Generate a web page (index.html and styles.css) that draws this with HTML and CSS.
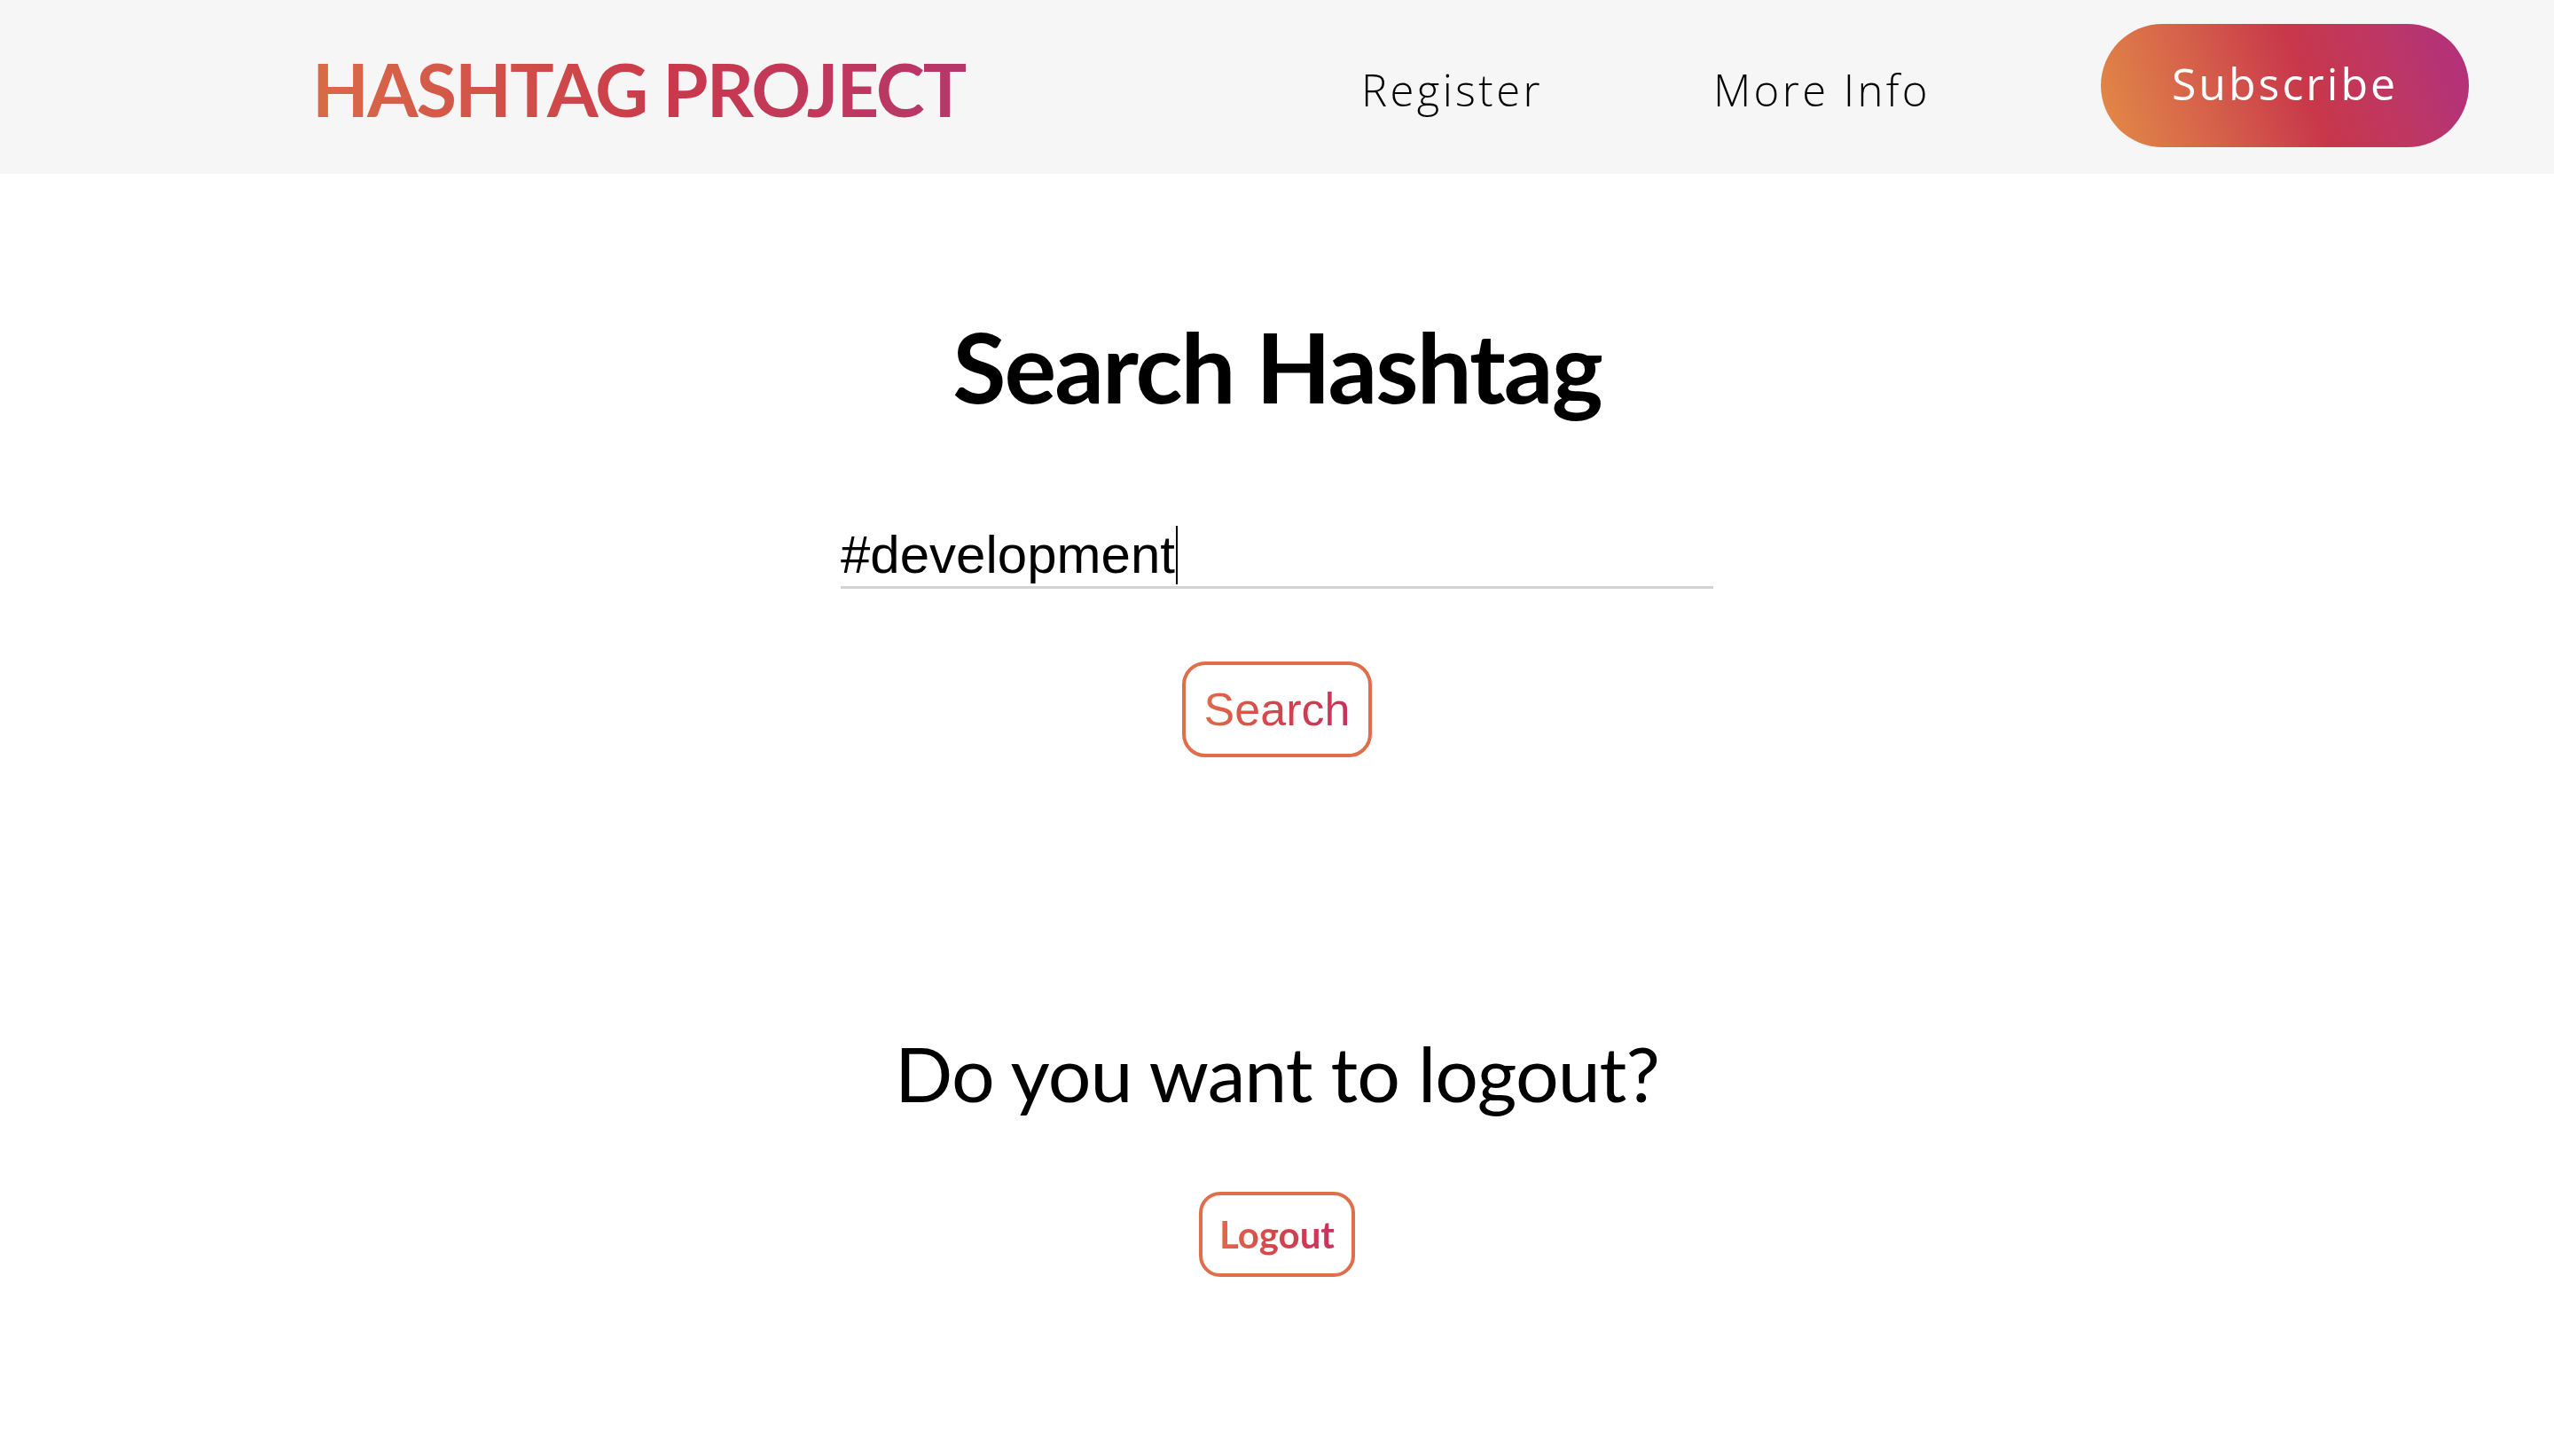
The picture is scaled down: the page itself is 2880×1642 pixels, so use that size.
FILE: index.html
```html
<!DOCTYPE html>
<html lang="en">
<head>
<meta charset="utf-8">
<title>Hashtag Project</title>
<link rel="stylesheet" href="styles.css">
</head>
<body>
<header class="topbar">
  <a class="logo" href="#">HASHTAG PROJECT</a>
  <nav class="nav">
    <a class="nav-link nav-register" href="#">Register</a>
    <a class="nav-link nav-info" href="#">More Info</a>
    <a class="subscribe" href="#">Subscribe</a>
  </nav>
</header>
<main class="content">
  <section class="search">
    <h1 class="search-title">Search Hashtag</h1>
    <div class="search-field"><span class="typed">#development</span><span class="caret"></span></div>
    <button class="search-btn" type="button"><span class="grad-text">Search</span></button>
  </section>
  <section class="logout">
    <h2 class="logout-title">Do you want to logout?</h2>
    <button class="logout-btn" type="button"><span class="grad-text">Logout</span></button>
  </section>
</main>
</body>
</html>
```
FILE: styles.css
```css
html, body {
  margin: 0;
  padding: 0;
  background: #ffffff;
}
body {
  font-family: "Lato", "Open Sans", sans-serif;
  color: #000;
}
.topbar {
  height: 196px;
  background: #f6f6f6;
  display: flex;
  align-items: center;
  justify-content: space-between;
  padding: 0 96px 0 352px;
  box-sizing: border-box;
}
.logo {
  font-family: "Lato", sans-serif;
  font-weight: 700;
  font-size: 83px;
  letter-spacing: -2px;
  text-decoration: none;
  background: linear-gradient(90deg, #d96b47 0%, #c9394b 55%, #b6376c 100%);
  -webkit-background-clip: text;
  background-clip: text;
  color: transparent;
  line-height: 1;
  padding-top: 4px;
}
.nav {
  display: flex;
  align-items: center;
}
.nav-link {
  font-family: "Open Sans", sans-serif;
  font-weight: 300;
  font-size: 49px;
  letter-spacing: 3.4px;
  color: #000;
  text-decoration: none;
  padding-top: 6px;
}
.nav-register {
  margin-right: 192px;
}
.nav-info {
  margin-right: 192px;
}
.subscribe {
  display: flex;
  align-items: center;
  justify-content: center;
  width: 415px;
  height: 139px;
  margin-bottom: 4px;
  border-radius: 70px;
  background: linear-gradient(70deg, #e38c47 0%, #d5604a 30%, #c8374a 55%, #bd3766 78%, #b02f80 100%);
  color: #fff;
  font-family: "Open Sans", sans-serif;
  font-size: 50px;
  letter-spacing: 3px;
  text-decoration: none;
  padding-bottom: 4px;
  box-sizing: border-box;
}
.content {
  display: flex;
  flex-direction: column;
  align-items: center;
}
.search {
  display: flex;
  flex-direction: column;
  align-items: center;
  margin-top: 150px;
}
.search-title {
  margin: 0;
  font-family: "Lato", sans-serif;
  font-weight: 700;
  font-size: 110px;
  line-height: 1.2;
  letter-spacing: -2px;
}
.search-field {
  width: 984px;
  margin-top: 113px;
  border-bottom: 3px solid #d3d3d3;
  font-family: "Liberation Sans", Arial, sans-serif;
  font-size: 60px;
  line-height: 70px;
  height: 70px;
  display: flex;
  align-items: center;
}
.caret {
  display: inline-block;
  width: 2px;
  height: 66px;
  background: #000;
  margin-left: 1px;
}
.grad-text {
  background: linear-gradient(90deg, #e06a48 0%, #d4444c 50%, #c6325e 100%);
  -webkit-background-clip: text;
  background-clip: text;
  color: transparent;
}
.search-btn {
  margin-top: 82px;
  width: 214px;
  height: 108px;
  border: 4px solid #df6e4a;
  border-radius: 26px;
  background: #fff;
  font-family: "Liberation Sans", Arial, sans-serif;
  font-size: 52px;
  padding: 0;
  cursor: pointer;
}
.logout {
  display: flex;
  flex-direction: column;
  align-items: center;
  margin-top: 304px;
}
.logout-title {
  margin: 0;
  font-family: "Lato", sans-serif;
  font-weight: 400;
  font-size: 86px;
  line-height: 1.2;
  letter-spacing: -1px;
}
.logout-btn {
  margin-top: 83px;
  width: 176px;
  height: 96px;
  border: 4px solid #df6e4a;
  border-radius: 24px;
  background: #fff;
  font-family: "Lato", sans-serif;
  font-weight: 700;
  font-size: 42px;
  padding: 0;
  cursor: pointer;
}
```
